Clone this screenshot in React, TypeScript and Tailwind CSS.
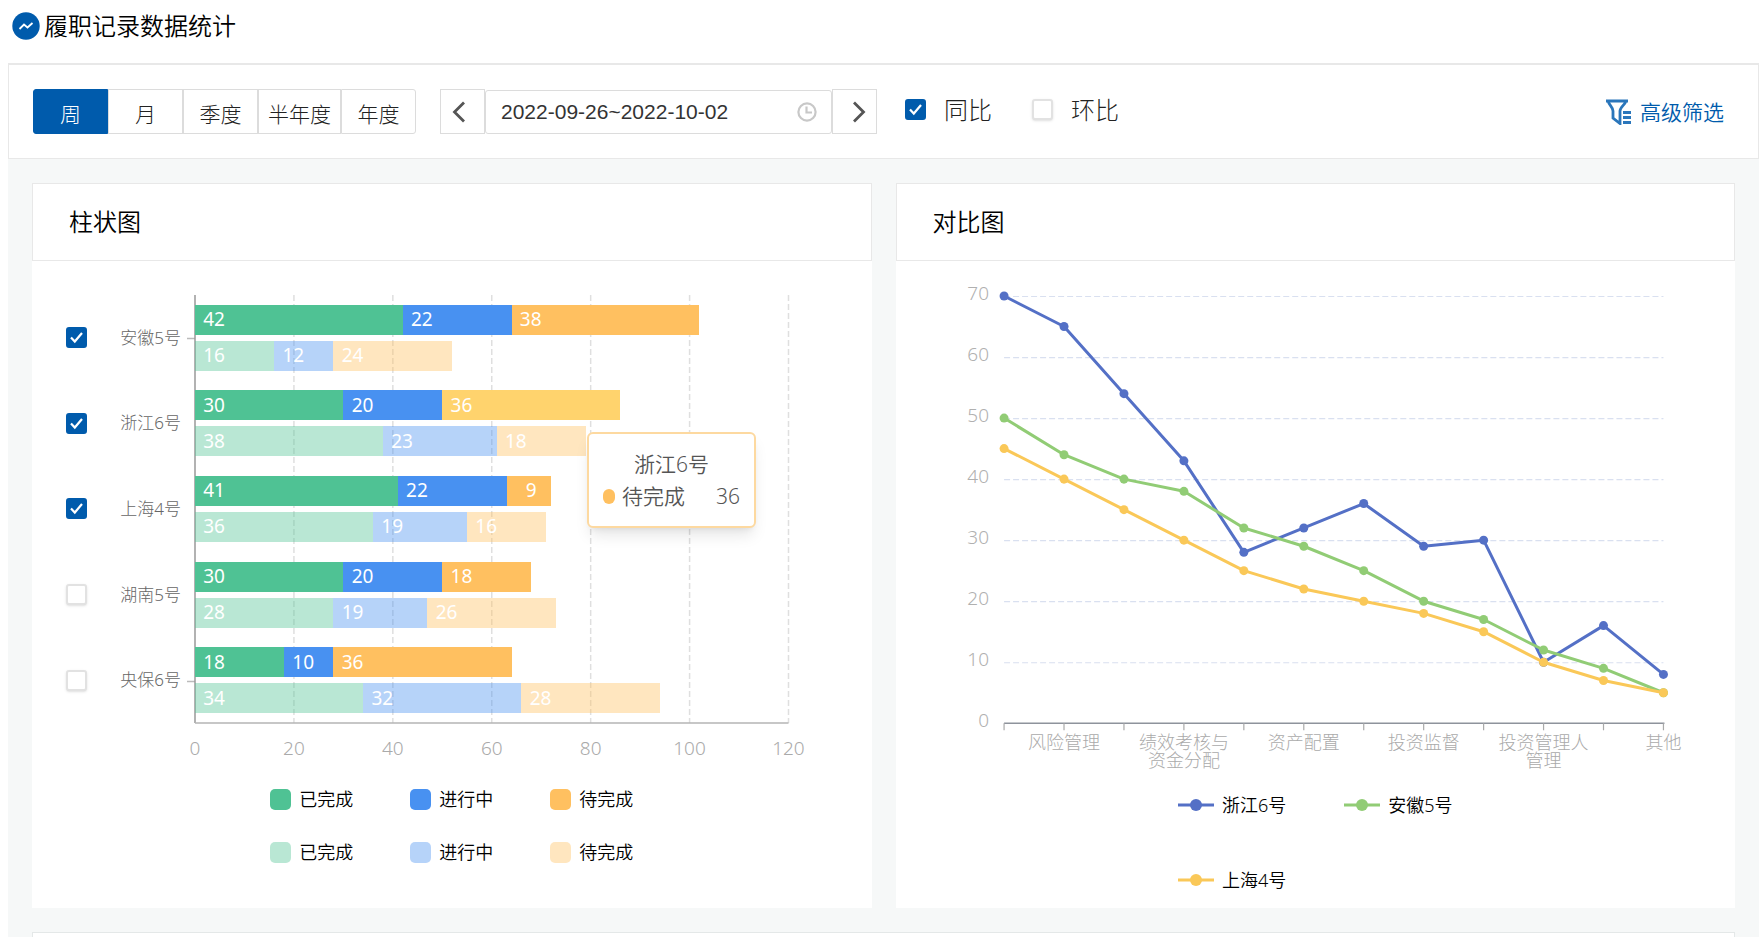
import React, { useState } from "react";

interface BarRow {
  name: string;
  checked: boolean;
  current: number[];
  previous: number[];
}

interface LineSeries {
  name: string;
  color: string;
  data: number[];
}

const periods = [
  { label: "周", width: "w-[75px]" },
  { label: "月", width: "w-[75px]" },
  { label: "季度", width: "w-[75px]" },
  { label: "半年度", width: "w-[83px]" },
  { label: "年度", width: "w-[75px]" },
];

const barRows: BarRow[] = [
  { name: "安徽5号", checked: true, current: [42, 22, 38], previous: [16, 12, 24] },
  { name: "浙江6号", checked: true, current: [30, 20, 36], previous: [38, 23, 18] },
  { name: "上海4号", checked: true, current: [41, 22, 9], previous: [36, 19, 16] },
  { name: "湖南5号", checked: false, current: [30, 20, 18], previous: [28, 19, 26] },
  { name: "央保6号", checked: false, current: [18, 10, 36], previous: [34, 32, 28] },
];

const barTicks = [0, 20, 40, 60, 80, 100, 120];
const barMax = 120;
const statusNames = ["已完成", "进行中", "待完成"];
const solidColors = ["bg-[#4fc294]", "bg-[#4891f1]", "bg-[#ffc060]"];
const lightColors = ["bg-[#4fc294]/40", "bg-[#4891f1]/40", "bg-[#ffc060]/40"];

const lineSeries: LineSeries[] = [
  { name: "浙江6号", color: "#5470c6", data: [70, 65, 54, 43, 28, 32, 36, 29, 30, 10, 16, 8] },
  { name: "安徽5号", color: "#91cc75", data: [50, 44, 40, 38, 32, 29, 25, 20, 17, 12, 9, 5] },
  { name: "上海4号", color: "#fac858", data: [45, 40, 35, 30, 25, 22, 20, 18, 15, 10, 7, 5] },
];

const lineLabels: { index: number; lines: string[] }[] = [
  { index: 1, lines: ["风险管理"] },
  { index: 3, lines: ["绩效考核与", "资金分配"] },
  { index: 5, lines: ["资产配置"] },
  { index: 7, lines: ["投资监督"] },
  { index: 9, lines: ["投资管理人", "管理"] },
  { index: 11, lines: ["其他"] },
];

const Checkbox: React.FC<{
  id: string;
  checked: boolean;
  onChange: () => void;
}> = ({ id, checked, onChange }) => (
  <span className="grid shrink-0 place-items-center">
    <input
      id={id}
      type="checkbox"
      checked={checked}
      onChange={onChange}
      className="col-start-1 row-start-1 h-[21px] w-[21px] cursor-pointer appearance-none rounded-[3px] border-2 border-[#e2e2e2] bg-white shadow-sm checked:border-[#005bac] checked:bg-[#005bac] checked:shadow-none"
    />
    {checked && (
      <svg
        className="pointer-events-none col-start-1 row-start-1"
        width="15"
        height="13"
        viewBox="0 0 15 13"
        fill="none"
        stroke="#fff"
        strokeWidth="2.2"
      >
        <path d="M2 6.5 L5.8 10.5 L13 2" />
      </svg>
    )}
  </span>
);

const Card: React.FC<{ title: string; children: React.ReactNode }> = ({
  title,
  children,
}) => (
  <section className="flex flex-1 flex-col bg-white">
    <h2 className="border border-[#e8e8e8] px-9 py-5 text-2xl leading-9 font-[350] text-black">
      {title}
    </h2>
    {children}
  </section>
);

const Bar: React.FC<{
  values: number[];
  colors: string[];
  active?: number;
}> = ({ values, colors, active }) => (
  <div className="flex h-[30px]">
    {values.map((value, i) => (
      <div
        key={i}
        className={`flex items-center pl-2 ${active === i ? "bg-[#ffd36d]" : colors[i]}`}
        style={{ width: `${(value / barMax) * 100}%` }}
      >
        <span className="w-[22px] text-right text-[19px] leading-none text-white">
          {value}
        </span>
      </div>
    ))}
  </div>
);

const BarChart = () => {
  const [rows, setRows] = useState(barRows);

  const toggle = (name: string) => {
    setRows(
      rows.map((r) => (r.name === name ? { ...r, checked: !r.checked } : r))
    );
  };

  return (
    <div className="pt-[34px] pr-[83px] pb-11 pl-[34px]">
      <div className="relative flex h-[428px] flex-col">
        <svg className="absolute top-0 right-0 h-full w-[calc(100%-129px)] overflow-visible">
          {barTicks.slice(1).map((t) => (
            <line
              key={t}
              x1={`${(t / barMax) * 100}%`}
              x2={`${(t / barMax) * 100}%`}
              y1="0"
              y2="100%"
              stroke="#dfdfdf"
              strokeWidth="1.5"
              strokeDasharray="6 3"
            />
          ))}
          <path d="M-8 43.5 H0 M-8 386.5 H0" stroke="#bbb" strokeWidth="1.5" />
          <line x1="0" x2="0" y1="0" y2="100%" stroke="#999" strokeWidth="1.5" />
          <line x1="0" x2="100%" y1="100%" y2="100%" stroke="#b5b5b5" strokeWidth="1.5" />
        </svg>
        {rows.map((row, i) => (
          <div key={row.name} className="relative flex flex-1 items-center">
            <div className="flex w-[129px] shrink-0 items-center justify-between pr-[14px]">
              <Checkbox
                id={`row-${i}`}
                checked={row.checked}
                onChange={() => toggle(row.name)}
              />
              <label
                htmlFor={`row-${i}`}
                className="text-[17px] leading-6 font-light text-[#666]"
              >
                {row.name}
              </label>
            </div>
            <div className="flex flex-1 flex-col gap-[6px]">
              <Bar
                values={row.current}
                colors={solidColors}
                active={i === 1 ? 2 : undefined}
              />
              <Bar values={row.previous} colors={lightColors} />
            </div>
          </div>
        ))}
        <div className="absolute top-[137px] left-[521px] w-[169px] rounded-md border-2 border-[#fdd9a0] bg-white px-[14px] py-[14px] text-[21px] leading-8 font-[350] text-[#555] shadow-lg">
          <div className="text-center">浙江6号</div>
          <div className="flex items-center">
            <span className="mr-[7px] h-[15px] w-3 rounded-full bg-[#ffc060]" />
            <span>待完成</span>
            <span className="ml-auto">36</span>
          </div>
        </div>
      </div>
      <div className="ml-[129px] flex justify-between pt-[13px] text-[19px] leading-6 font-light text-[#aaa]">
        {barTicks.map((t) => (
          <span key={t} className="flex w-0 justify-center">
            {t}
          </span>
        ))}
      </div>
      <div className="ml-[49px] flex flex-col items-center gap-[29px] pt-[27px]">
        {[solidColors, lightColors].map((colors, i) => (
          <div key={i} className="flex gap-[57px]">
            {statusNames.map((name, j) => (
              <div
                key={name}
                className="flex items-center gap-2 text-lg leading-6 font-[350] text-black"
              >
                <span className={`h-[21px] w-[21px] rounded-[5px] ${colors[j]}`} />
                {name}
              </div>
            ))}
          </div>
        ))}
      </div>
    </div>
  );
};

const LineChart = () => {
  const left = 108;
  const right = 767;
  const top = 35;
  const bottom = 462;
  const x = (i: number) => left + ((right - left) / 11) * i;
  const y = (v: number) => bottom - ((bottom - top) / 70) * v;

  return (
    <div className="pb-3">
      <svg viewBox="0 0 839 520" className="block w-full">
        {[0, 10, 20, 30, 40, 50, 60, 70].map((v) => (
          <g key={v}>
            {v > 0 && (
              <line
                x1={left}
                x2={right}
                y1={Math.round(y(v)) + 0.5}
                y2={Math.round(y(v)) + 0.5}
                stroke="#d9e0f0"
                strokeWidth="1.2"
                strokeDasharray="6 3"
              />
            )}
            <text
              x={left - 15}
              y={y(v) + 4}
              textAnchor="end"
              className="fill-[#b0b0b0] text-[19px] font-light"
            >
              {v}
            </text>
          </g>
        ))}
        <line x1={left} x2={right + 1} y1={bottom} y2={bottom} stroke="#8e939c" strokeWidth="1.5" />
        {lineSeries[0].data.map((_, i) => (
          <line key={i} x1={x(i)} x2={x(i)} y1={bottom} y2={bottom + 7} stroke="#aaa" strokeWidth="1.2" />
        ))}
        {lineLabels.map(({ index, lines }) => (
          <text
            key={index}
            y={bottom + 26}
            textAnchor="middle"
            className="fill-[#aaa] text-lg font-light"
          >
            {lines.map((line, n) => (
              <tspan key={line} x={x(index)} dy={n * 18}>
                {line}
              </tspan>
            ))}
          </text>
        ))}
        {lineSeries.map((s) => (
          <g key={s.name}>
            <polyline
              points={s.data.map((v, i) => `${x(i)},${y(v)}`).join(" ")}
              fill="none"
              stroke={s.color}
              strokeWidth="3"
              strokeLinejoin="bevel"
            />
            {s.data.map((v, i) => (
              <circle key={i} cx={x(i)} cy={y(v)} r="4.5" fill={s.color} />
            ))}
          </g>
        ))}
      </svg>
      <div className="mx-auto grid w-fit grid-cols-2 gap-x-[58px] gap-y-[51px] pt-3">
        {lineSeries.map((s) => (
          <div
            key={s.name}
            className="flex items-center gap-2 text-lg leading-6 font-[350] text-black"
          >
            <svg width="36" height="12" viewBox="0 0 36 12">
              <line x1="0" x2="36" y1="6" y2="6" stroke={s.color} strokeWidth="3" />
              <circle cx="18" cy="6" r="6" fill={s.color} />
            </svg>
            {s.name}
          </div>
        ))}
      </div>
    </div>
  );
};

const App: React.FC = () => {
  const [period, setPeriod] = useState("周");
  const [range, setRange] = useState("2022-09-26~2022-10-02");
  const [yearOnYear, setYearOnYear] = useState(true);
  const [monthOnMonth, setMonthOnMonth] = useState(false);

  return (
    <div className="flex min-h-screen flex-col bg-white pr-1 pl-2 font-['Noto_Sans','Noto_Sans_CJK_SC',sans-serif]">
      <header className="flex h-[63px] items-center gap-1 pb-[11px] pl-1">
        <svg width="28" height="28" viewBox="0 0 28 28">
          <circle cx="14" cy="14" r="13.7" fill="#005bac" />
          <path
            d="M7.5 17 L12 12.5 L15.5 15.5 L20.5 11"
            fill="none"
            stroke="#fff"
            strokeWidth="1.8"
          />
        </svg>
        <h1 className="text-2xl leading-9 font-[350] text-black">履职记录数据统计</h1>
      </header>

      <div className="flex items-center border border-t-2 border-[#e8e8e8] py-6 pr-[34px] pl-6">
        <div className="flex">
          {periods.map((p) => (
            <button
              key={p.label}
              type="button"
              onClick={() => setPeriod(p.label)}
              className={`h-[45px] cursor-pointer border pt-1 text-[21px] leading-8 font-light first:rounded-l-[3px] last:rounded-r-[3px] ${p.width} ${
                period === p.label
                  ? "border-[#005bac] bg-[#005bac] text-white"
                  : "border-[#dcdcdc] bg-white text-[#222]"
              }`}
            >
              {p.label}
            </button>
          ))}
        </div>

        <div className="ml-6 flex items-end">
          <button
            type="button"
            aria-label="上一周"
            className="flex h-[45px] w-[45px] cursor-pointer items-center justify-center border border-[#dcdcdc] pr-2"
          >
            <svg width="14" height="22" viewBox="0 0 14 22" fill="none" stroke="#555" strokeWidth="2.8">
              <path d="M12 1.5 L2.5 11 L12 20.5" />
            </svg>
          </button>
          <div className="flex h-[44px] w-[347px] items-center rounded-[3px] border border-[#dcdcdc] pr-[14px] pl-[15px]">
            <input
              type="text"
              aria-label="日期范围"
              value={range}
              onChange={(e) => setRange(e.target.value)}
              className="min-w-0 flex-1 font-['Liberation_Sans',sans-serif] text-[21px] leading-6 text-[#333] outline-none"
            />
            <svg width="20" height="20" viewBox="0 0 20 20" fill="none" stroke="#c8c8c8" strokeWidth="2.2">
              <circle cx="10" cy="10" r="8.6" />
              <path d="M9.5 4.5 V10.5 H15" />
            </svg>
          </div>
          <button
            type="button"
            aria-label="下一周"
            className="flex h-[45px] w-[45px] cursor-pointer items-center justify-center border border-[#dcdcdc] pl-2"
          >
            <svg width="14" height="22" viewBox="0 0 14 22" fill="none" stroke="#555" strokeWidth="2.8">
              <path d="M2 1.5 L11.5 11 L2 20.5" />
            </svg>
          </button>
        </div>

        <div className="mb-1 ml-7 flex gap-10 text-2xl leading-8 font-light text-[#222]">
          <div className="flex items-center gap-[18px]">
            <Checkbox id="yoy" checked={yearOnYear} onChange={() => setYearOnYear(!yearOnYear)} />
            <label htmlFor="yoy">同比</label>
          </div>
          <div className="flex items-center gap-[18px]">
            <Checkbox id="mom" checked={monthOnMonth} onChange={() => setMonthOnMonth(!monthOnMonth)} />
            <label htmlFor="mom">环比</label>
          </div>
        </div>

        <button
          type="button"
          className="ml-auto flex cursor-pointer items-center gap-2 text-[21px] leading-8 font-[350] text-[#005bac]"
        >
          <svg width="26" height="26" viewBox="0 0 26 26" fill="none" stroke="#2a76bb" strokeWidth="2.8">
            <path d="M0 2 H22 M2 2 C3 6 7 8 7 12 V19 L14 24.5 V12 C14 8 19 6 20 2" />
            <path d="M17 13.5 H25 M17 18.5 H25 M17 23.5 H25" />
          </svg>
          高级筛选
        </button>
      </div>

      <main className="flex flex-1 flex-col gap-6 bg-[#f6f8f8] px-6 pt-6">
        <div className="flex gap-6">
          <Card title="柱状图">
            <BarChart />
          </Card>
          <Card title="对比图">
            <LineChart />
          </Card>
        </div>
        <div className="flex-1 border border-b-0 border-[#e4e8e8] bg-white" />
      </main>
    </div>
  );
};

export default App;
